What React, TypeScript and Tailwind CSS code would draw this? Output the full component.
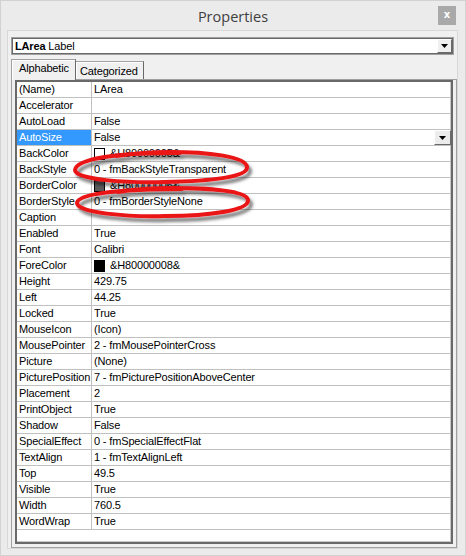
import React from 'react';

type Row = {
  label: string;
  value?: string;
  swatch?: string;
  selected?: boolean;
  dropdown?: boolean;
};

const rows: Row[] = [
  { label: '(Name)', value: 'LArea' },
  { label: 'Accelerator', value: '' },
  { label: 'AutoLoad', value: 'False' },
  { label: 'AutoSize', value: 'False', selected: true, dropdown: true },
  { label: 'BackColor', value: '&H80000005&', swatch: '#ffffff' },
  { label: 'BackStyle', value: '0 - fmBackStyleTransparent' },
  { label: 'BorderColor', value: '&H80000006&', swatch: '#5a5a5a' },
  { label: 'BorderStyle', value: '0 - fmBorderStyleNone' },
  { label: 'Caption', value: '' },
  { label: 'Enabled', value: 'True' },
  { label: 'Font', value: 'Calibri' },
  { label: 'ForeColor', value: '&H80000008&', swatch: '#000000' },
  { label: 'Height', value: '429.75' },
  { label: 'Left', value: '44.25' },
  { label: 'Locked', value: 'True' },
  { label: 'MouseIcon', value: '(Icon)' },
  { label: 'MousePointer', value: '2 - fmMousePointerCross' },
  { label: 'Picture', value: '(None)' },
  { label: 'PicturePosition', value: '7 - fmPicturePositionAboveCenter' },
  { label: 'Placement', value: '2' },
  { label: 'PrintObject', value: 'True' },
  { label: 'Shadow', value: 'False' },
  { label: 'SpecialEffect', value: '0 - fmSpecialEffectFlat' },
  { label: 'TextAlign', value: '1 - fmTextAlignLeft' },
  { label: 'Top', value: '49.5' },
  { label: 'Visible', value: 'True' },
  { label: 'Width', value: '760.5' },
  { label: 'WordWrap', value: 'True' },
];

const DownArrow = () => (
  <svg width="7" height="4" viewBox="0 0 7 4">
    <path d="M0 0h7L3.5 4z" fill="#000" />
  </svg>
);

// hand drawn red rings over BackStyle / BorderStyle
const Ellipses = () => (
  <svg
    className="absolute top-0 left-0 pointer-events-none"
    width="466"
    height="556"
    viewBox="1 1 466 556"
  >
    <defs>
      <filter id="shade" x="-10%" y="-50%" width="120%" height="200%">
        <feDropShadow dx="3" dy="4" stdDeviation="1.8" floodColor="#000" floodOpacity="0.5" />
      </filter>
    </defs>
    <g fill="none" stroke="#ea1219" strokeWidth="4" strokeLinecap="round" filter="url(#shade)">
      <path d="M180 153 C118 152, 76 159, 75 170 C75 180, 128 183, 165 182 C212 181, 248 177, 247 167 C246 156, 206 152, 170 152 C150 152, 130 154, 116 156" />
      <path d="M182 189 C118 189, 78 194, 77 203 C77 213, 128 217, 165 216 C212 216, 249 210, 248 200 C247 191, 210 188, 172 188 C150 188, 130 190, 118 192" />
    </g>
  </svg>
);

export default function App() {
  return (
    <div className="relative w-[466px] h-[556px] bg-[#ebebeb] border border-[#d2d2d2] flex flex-col font-['Liberation_Sans',Arial,sans-serif] text-[11px] tracking-[-0.15px] text-black">
      {/* Title bar */}
      <div className="relative h-[29px] flex items-center justify-center pt-[2px]">
        <span className="font-['Open_Sans',sans-serif] text-[14.5px] tracking-normal text-[#3f3f3f]">Properties</span>
        <div className="absolute right-[9px] top-[5px] w-[18px] h-[19px] bg-[#a9a9a9] flex items-center justify-center text-white font-bold text-[10px] font-['DejaVu_Sans',sans-serif] leading-none pb-[2px]">
          x
        </div>
      </div>

      {/* Panel */}
      <div className="ml-[6px] w-[451px] h-[519px] bg-[#f0f0f0] border border-[#d8d8d8] pl-[3px] pt-[6px] flex flex-col">
        {/* Object combo */}
        <div className="w-[443px] h-[18px] border border-[#a0a0a0]">
          <div className="h-full bg-white border border-[#696969] flex items-center">
            <span className="pl-[2px] leading-[14px]">
              <span className="font-bold">LArea</span> Label
            </span>
            <div className="ml-auto w-[15px] h-full bg-[#f0f0f0] border-t border-l border-t-white border-l-white border-r border-b border-r-[#696969] border-b-[#696969] flex items-center justify-center">
              <DownArrow />
            </div>
          </div>
        </div>

        {/* Tabs */}
        <div className="mt-[4px] h-[20px] flex items-end">
          <div className="relative z-10 -mb-px h-[21px] w-[65px] bg-[#f0f0f0] border-l border-t border-[#a0a0a0] border-r border-r-[#696969] shadow-[inset_1px_1px_0_#ffffff] flex items-center pl-[7px] pb-[3px]">
            Alphabetic
          </div>
          <div className="h-[18px] w-[68px] bg-[#f0f0f0] border-t border-[#a0a0a0] border-r border-r-[#696969] shadow-[inset_1px_1px_0_#ffffff] flex items-center pl-[4px] pt-[1px]">
            Categorized
          </div>
        </div>

        {/* Tab page */}
        <div className="w-[446px] h-[469px] border border-[#a0a0a0] px-[3px] pb-[3px] flex flex-col">
          <div className="flex-1 bg-white border-2 border-[#696969] shadow-[inset_-1px_-1px_0_#c8c8c8] overflow-hidden">
            {rows.map((r) => (
              <div key={r.label} className="flex h-[16px] border-b border-[#c0c0c0]">
                <div
                  className={`w-[75px] shrink-0 border-r border-[#c0c0c0] pl-[2px] leading-[15px] whitespace-nowrap overflow-hidden ${
                    r.selected ? 'bg-[#3399ff] text-white' : ''
                  }`}
                >
                  {r.label}
                </div>
                <div className="flex-1 flex items-center pl-[2px] leading-[15px] whitespace-nowrap">
                  {r.swatch && (
                    <span
                      className="w-[11px] h-[12px] border border-black mr-[5px] shrink-0"
                      style={{ backgroundColor: r.swatch }}
                    />
                  )}
                  <span>{r.value}</span>
                  {r.dropdown && (
                    <div className="ml-auto w-[17px] h-[15px] bg-[#ececec] border-t border-l border-t-white border-l-white border-r border-b border-r-[#696969] border-b-[#696969] flex items-center justify-center">
                      <DownArrow />
                    </div>
                  )}
                </div>
              </div>
            ))}
          </div>
        </div>
      </div>

      <Ellipses />
    </div>
  );
}
